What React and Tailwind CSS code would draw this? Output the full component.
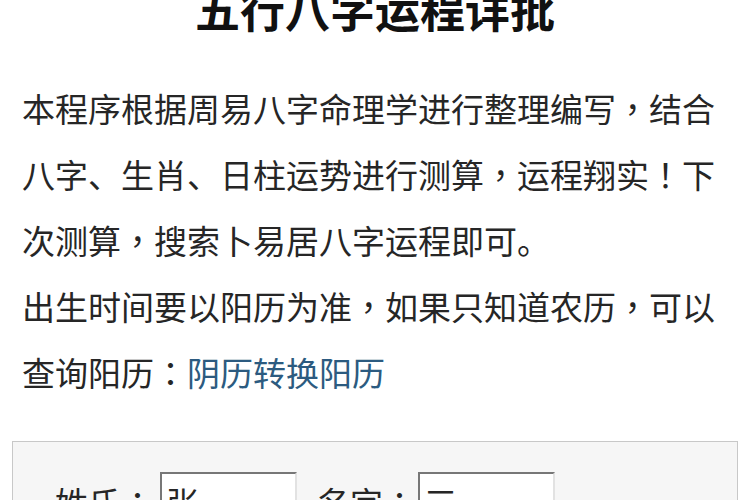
import React from 'react';

const cjk = { fontFamily: '"Noto Sans CJK SC", "Noto Sans", sans-serif' };

// centred full-width punctuation, as in the screenshot
const P = ({ children }) => (
  <span style={{ fontFamily: '"Noto Sans CJK TC", sans-serif' }}>{children}</span>
);

export default function App() {
  return (
    <div className="w-[750px] h-[500px] overflow-hidden bg-white text-[#262626]" style={cjk}>
      <h1 className="-mt-[14px] text-center text-[45px] leading-[45px] font-bold text-[#111]">
        五行八字运程详批
      </h1>

      <div className="mt-[44px] pl-[22px] w-[722px] text-[33px] leading-[66px]">
        <p>
          本程序根据周易八字命理学进行整理编写<P>，</P>结合八字、生肖、日柱运势进行测算<P>，</P>运程翔实<P>！</P>下次测算<P>，</P>搜索卜易居八字运程即可。
        </p>
        <p>
          出生时间要以阳历为准<P>，</P>如果只知道农历<P>，</P>可以查询阳历<P>：</P>
          <a href="#" className="text-[#2c5b80]">阴历转换阳历</a>
        </p>
      </div>

      <div className="mt-[36px] mx-[12px] border border-[#c8c8c8] bg-[#f6f6f6] pt-[30px] pl-[42px] h-[200px]">
        <div className="flex items-start text-[33px] leading-[40px]">
          <span className="mt-[10px]">姓氏<P>：</P></span>
          <input
            defaultValue="张"
            className="ml-[6px] w-[137px] h-[50px] bg-white border-2 border-t-[#777] border-l-[#777] border-r-[#e2e2e2] border-b-[#e2e2e2] px-[4px] pt-[10px] text-[33px] outline-none"
          />
          <span className="ml-[20px] mt-[10px]">名字<P>：</P></span>
          <input
            defaultValue="三"
            className="ml-[2px] w-[137px] h-[50px] bg-white border-2 border-t-[#777] border-l-[#777] border-r-[#e2e2e2] border-b-[#e2e2e2] px-[4px] pt-[10px] text-[33px] outline-none"
          />
        </div>
      </div>
    </div>
  );
}
